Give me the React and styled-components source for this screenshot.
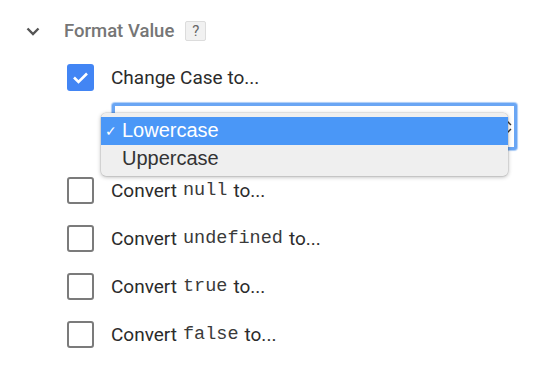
import styled, { createGlobalStyle } from 'styled-components';

const GlobalStyle = createGlobalStyle`
  body {
    margin: 0;
    background: #fff;
    font-family: Roboto, 'Liberation Sans', sans-serif;
  }
`;

const Page = styled.div`
  padding: 20px 0 0 26px;
  width: 550px;
  height: 380px;
  box-sizing: border-box;
`;

const Header = styled.div`
  display: flex;
  align-items: center;
  height: 22px;
`;

const Chevron = styled.svg`
  width: 14px;
  height: 9px;
  margin-right: 24px;
`;

const Title = styled.span`
  font-size: 18.5px;
  font-weight: 500;
  color: #767676;
  margin-right: 11px;
`;

const Help = styled.span`
  display: inline-flex;
  align-items: center;
  justify-content: center;
  width: 21px;
  height: 20px;
  box-sizing: border-box;
  border: 1px solid #dcdcdc;
  background: #f1f1f1;
  border-radius: 2px;
  font-size: 15px;
  color: #666;
`;

const Options = styled.div`
  margin-left: 41px;
  margin-top: 22px;
  display: flex;
  flex-direction: column;
`;

const Row = styled.label`
  display: flex;
  align-items: center;
  height: 27px;
  margin-bottom: ${(p) => p.$gap}px;
  font-size: 19px;
  color: #2b2b2b;
  white-space: pre;
`;

const Box = styled.span`
  width: 27px;
  height: 27px;
  box-sizing: border-box;
  border-radius: 3px;
  margin-right: 17px;
  display: flex;
  align-items: center;
  justify-content: center;
  flex-shrink: 0;
  background: ${(p) => (p.$checked ? '#4285f4' : '#fff')};
  border: ${(p) => (p.$checked ? 'none' : '2.5px solid #7b7b7b')};
`;

const Code = styled.code`
  font-family: 'Liberation Mono', 'DejaVu Sans Mono', monospace;
  font-size: 18.5px;
  margin: 0 6px;
  color: #3a3a3a;
`;

const SelectWrap = styled.div`
  position: relative;
  margin: 0 0 27px 45px;
  width: 405px;
  height: 47px;
`;

const SelectBox = styled.div`
  width: 100%;
  height: 100%;
  box-sizing: border-box;
  border: 3px solid #6aa6f4;
  border-radius: 3px;
  box-shadow: 0 0 1px 1px #a9cbf7;
  background: #fff;
  display: flex;
  align-items: center;
  justify-content: flex-end;
  padding-right: 2px;
`;

const Arrows = styled.svg`
  width: 8px;
  height: 14px;
`;

const Menu = styled.ul`
  position: absolute;
  top: 10px;
  left: -11px;
  width: 407px;
  margin: 0;
  padding: 4px 0;
  list-style: none;
  background: #efefef;
  border-radius: 5px;
  box-shadow: 0 1px 4px rgba(0, 0, 0, 0.3), 0 0 0 0.5px rgba(0, 0, 0, 0.12);
  font-family: 'Liberation Sans', Roboto, sans-serif;
`;

const MenuItem = styled.li`
  display: flex;
  align-items: center;
  height: 27.5px;
  padding-left: 4px;
  font-size: 20px;
  background: ${(p) => (p.$active ? '#4a97f7' : 'transparent')};
  color: ${(p) => (p.$active ? '#fff' : '#333')};
`;

const Tick = styled.span`
  width: 17px;
  font-size: 14px;
`;

function Check() {
  return (
    <svg width="17" height="13" viewBox="0 0 17 13">
      <path d="M2 6.5l4.5 4.5L15 2.5" fill="none" stroke="#fff" strokeWidth="2.6" />
    </svg>
  );
}

const converts = ['null', 'undefined', 'true', 'false'];

export default function App() {
  return (
    <>
      <GlobalStyle />
      <Page>
        <Header>
          <Chevron viewBox="0 0 14 9">
            <path d="M1.5 1.5l5.5 5.5 5.5-5.5" fill="none" stroke="#555" strokeWidth="2.4" />
          </Chevron>
          <Title>Format Value</Title>
          <Help>?</Help>
        </Header>
        <Options>
          <Row $gap={12}>
            <Box $checked>
              <Check />
            </Box>
            Change Case to...
          </Row>
          <SelectWrap>
            <SelectBox>
              <Arrows viewBox="0 0 8 14">
                <path d="M1 5l3-3 3 3M1 9l3 3 3-3" fill="none" stroke="#333" strokeWidth="1.4" />
              </Arrows>
            </SelectBox>
            <Menu>
              <MenuItem $active>
                <Tick>✓</Tick>Lowercase
              </MenuItem>
              <MenuItem>
                <Tick />Uppercase
              </MenuItem>
            </Menu>
          </SelectWrap>
          {converts.map((c) => (
            <Row key={c} $gap={21}>
              <Box />
              Convert<Code>{c}</Code>to...
            </Row>
          ))}
        </Options>
      </Page>
    </>
  );
}
